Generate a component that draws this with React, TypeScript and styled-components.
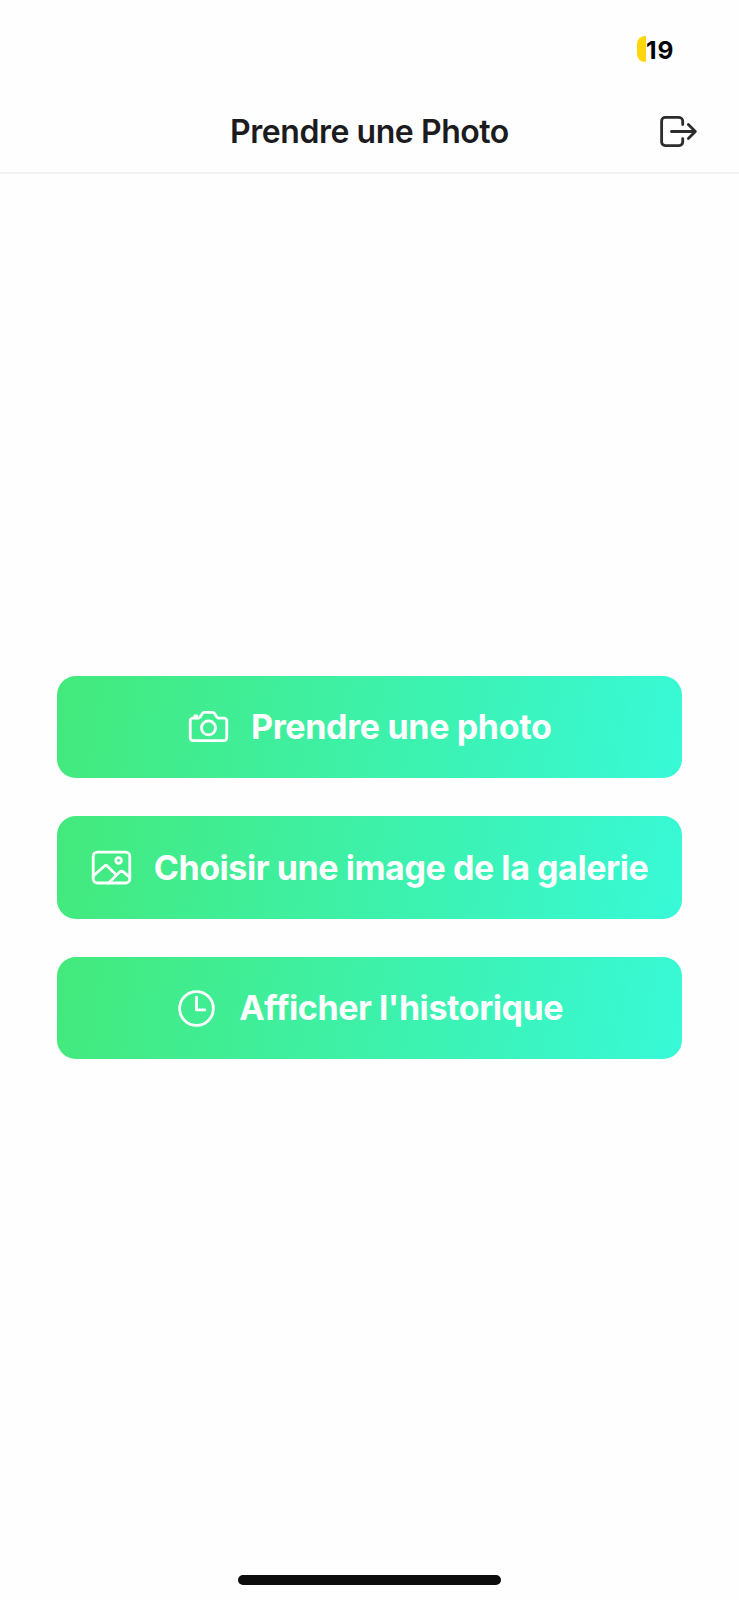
import React from 'react';
import styled, { createGlobalStyle } from 'styled-components';
import type { IconType } from 'react-icons';
import { IoCameraOutline, IoImageOutline, IoLogOutOutline, IoTimeOutline } from 'react-icons/io5';

const GlobalStyle = createGlobalStyle`
  * { box-sizing: border-box; }
  body { margin: 0; background: #fefefe; }
`;

const Screen = styled.div`
  width: 739px;
  height: 1600px;
  display: flex;
  flex-direction: column;
  background: #fefefe;
  font-family: Inter, 'Liberation Sans', sans-serif;
  overflow: hidden;
`;

const StatusBar = styled.div`
  height: 89px;
  display: flex;
  justify-content: flex-end;
  align-items: flex-start;
  padding: 36px 65px 0 0;
`;

const Battery = styled.div`
  width: 37px;
  height: 26px;
  display: flex;
  align-items: center;
`;

const BatteryFill = styled.span`
  width: 9px;
  height: 26px;
  flex: none;
  background: #fed60b;
  border-radius: 8px 0 0 8px;
`;

const BatteryLevel = styled.span`
  padding-top: 2px;
  font-size: 24.5px;
  line-height: 26px;
  font-weight: 700;
  letter-spacing: 0.9px;
  color: #000;
`;

const Header = styled.header`
  height: 85px;
  display: grid;
  grid-template-columns: 1fr auto 1fr;
  align-items: center;
  border-bottom: 2px solid #f2f2f2;
`;

const Title = styled.h1`
  grid-column: 2;
  margin: 0;
  padding-top: 2px;
  font-size: 32px;
  line-height: 40px;
  font-weight: 600;
  letter-spacing: -0.45px;
  color: #1c1c1e;
  white-space: nowrap;
`;

const ExitButton = styled.button`
  justify-self: end;
  display: flex;
  margin: 1px 38px 0 0;
  padding: 0;
  border: 0;
  background: none;
  color: #2c2c2e;
`;

const Actions = styled.main`
  flex: 1;
  display: flex;
  flex-direction: column;
  gap: 38.3px;
  padding: 501.7px 57px 0;
`;

const ActionButton = styled.button<{ $gap: number }>`
  height: 102.4px;
  display: flex;
  align-items: center;
  justify-content: center;
  gap: ${({ $gap }) => $gap}px;
  padding: 0 1.5px 0 0;
  border: 0;
  border-radius: 19px;
  background: linear-gradient(99.3deg, #43e97b, #38f9d7);
  color: #fff;
`;

const Label = styled.span<{ $tracking: number }>`
  font-family: Inter, 'Liberation Sans', sans-serif;
  font-size: 34px;
  line-height: 40px;
  font-weight: 700;
  letter-spacing: ${({ $tracking }) => $tracking}px;
  white-space: nowrap;
`;

const Footer = styled.footer`
  height: 25px;
  display: flex;
  justify-content: center;
  align-items: flex-start;
`;

const HomeIndicator = styled.div`
  width: 263px;
  height: 10px;
  border-radius: 5px;
  background: #0c0c0c;
`;

const actions: { icon: IconType; label: string; tracking: number; gap: number }[] = [
  { icon: IoCameraOutline, label: 'Prendre une photo', tracking: -0.34, gap: 20 },
  { icon: IoImageOutline, label: 'Choisir une image de la galerie', tracking: -0.43, gap: 19.5 },
  { icon: IoTimeOutline, label: "Afficher l'historique", tracking: -0.43, gap: 20 },
];

export default function App() {
  return (
    <>
      <GlobalStyle />
      <Screen>
        <StatusBar>
          <Battery>
            <BatteryFill />
            <BatteryLevel>19</BatteryLevel>
          </Battery>
        </StatusBar>
        <Header>
          <Title>Prendre une Photo</Title>
          <ExitButton aria-label="Quitter">
            <IoLogOutOutline size={45} />
          </ExitButton>
        </Header>
        <Actions>
          {actions.map(({ icon: Icon, label, tracking, gap }) => (
            <ActionButton key={label} $gap={gap}>
              <Icon size={45} />
              <Label $tracking={tracking}>{label}</Label>
            </ActionButton>
          ))}
        </Actions>
        <Footer>
          <HomeIndicator />
        </Footer>
      </Screen>
    </>
  );
}
